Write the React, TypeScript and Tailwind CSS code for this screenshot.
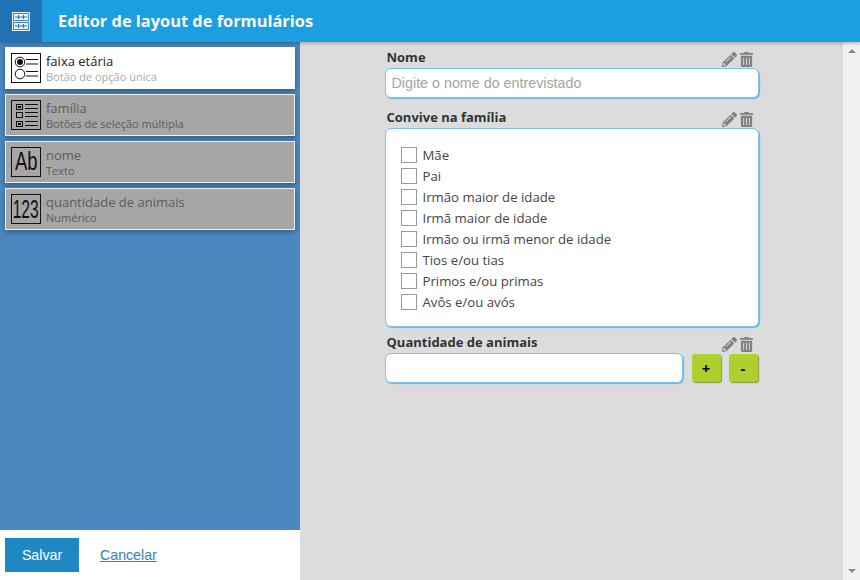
import { FaPencilAlt, FaTrashAlt } from "react-icons/fa";

const fields = [
  "Mãe",
  "Pai",
  "Irmão maior de idade",
  "Irmã maior de idade",
  "Irmão ou irmã menor de idade",
  "Tios e/ou tias",
  "Primos e/ou primas",
  "Avôs e/ou avós",
];

function RadioIcon() {
  return (
    <svg viewBox="0 0 30 30" className="w-[30px] h-[30px]">
      <rect x="0.5" y="0.5" width="29" height="29" fill="none" stroke="#111" />
      <circle cx="9" cy="9" r="4.8" fill="none" stroke="#111" />
      <circle cx="9" cy="9" r="3" fill="#111" />
      <circle cx="9" cy="21" r="4.8" fill="none" stroke="#111" />
      <path d="M15 6.5h12M15 11h12M15 18.5h12M15 23h12" stroke="#111" strokeWidth="1" />
    </svg>
  );
}

function CheckIcon() {
  return (
    <svg viewBox="0 0 30 30" className="w-[30px] h-[30px]">
      <rect x="0.5" y="0.5" width="29" height="29" fill="none" stroke="#111" />
      <rect x="5.5" y="4.5" width="6" height="5" fill="none" stroke="#111" />
      <rect x="7" y="6" width="3" height="2" fill="#111" />
      <rect x="5.5" y="12.5" width="6" height="5" fill="none" stroke="#111" />
      <rect x="5.5" y="21.5" width="6" height="5" fill="none" stroke="#111" />
      <rect x="7" y="23" width="3" height="2" fill="#111" />
      <path d="M14 4.5h13M14 8.5h13M14 12.5h13M14 16.5h13M14 21.5h13M14 25.5h13" stroke="#111" strokeWidth="1" />
    </svg>
  );
}

function TextBoxIcon({ label, small }: { label: string; small?: boolean }) {
  return (
    <div className="w-[30px] h-[30px] border border-[#111] flex items-center justify-center text-[#111] overflow-hidden font-['Liberation_Sans',sans-serif]">
      <span className={`shrink-0 inline-block ${small ? "text-[26px] scale-x-[0.6]" : "text-[25px] scale-x-[0.74]"}`}>{label}</span>
    </div>
  );
}

function SideItem({
  icon,
  title,
  sub,
  active,
}: {
  icon: React.ReactNode;
  title: string;
  sub: string;
  active?: boolean;
}) {
  return (
    <div
      className={`h-[42px] flex items-center gap-[5px] shadow-[0_2px_5px_rgba(0,0,0,0.35)] ${
        active ? "bg-white pl-[6px]" : "bg-[#a6a6a6] border border-[#f0f0f0] pl-[5px]"
      }`}
    >
      {icon}
      <div className="flex flex-col">
        <span className={`text-[13px] leading-[16px] ${active ? "text-[#222]" : "text-[#5c5c5c]"}`}>{title}</span>
        <span className={`text-[11px] leading-[15px] ${active ? "text-[#aaa]" : "text-[#5c5c5c]"}`}>{sub}</span>
      </div>
    </div>
  );
}

function FieldHeader({ label }: { label: string }) {
  return (
    <div className="flex items-end justify-between h-[17px] pl-[2px] pr-[5px]">
      <span className="text-[13px] leading-[17px] font-bold text-[#333]">{label}</span>
      <span className="flex items-center gap-[2px] text-[#808080] translate-y-[1px]">
        <FaPencilAlt size={15} />
        <FaTrashAlt size={15} />
      </span>
    </div>
  );
}

const inputBox =
  "relative bg-white rounded-[6px] border border-[#7cc4ee] shadow-[1px_1px_1px_#5fb6ec]";

export default function App() {
  return (
    <div className="w-[860px] h-[580px] flex flex-col overflow-hidden font-['Open_Sans',sans-serif]">
      <header className="h-[42px] flex items-center bg-[#1b9ee2] relative z-10 shadow-[0_1px_4px_rgba(0,0,0,0.3)]">
        <div className="w-[42px] h-[42px] bg-[#1f73b4] flex items-center justify-center">
          <svg viewBox="0 0 18 19" className="w-[18px] h-[19px]">
            <rect width="18" height="19" fill="#e8f2fa" />
            <rect x="1.5" y="1.5" width="15" height="7" fill="none" stroke="#3f86c4" />
            <rect x="1.5" y="10.5" width="15" height="7" fill="none" stroke="#3f86c4" />
            <path d="M3 5h12M3 14h12M6.5 3v4M11.5 3v4M6.5 12v4M11.5 12v4" stroke="#2f6fc0" />
          </svg>
        </div>
        <h1 className="ml-4 text-[16.4px] font-bold text-white">Editor de layout de formulários</h1>
      </header>

      <div className="flex-1 flex min-h-0">
        <aside className="w-[300px] flex flex-col bg-[#4a88bf]">
          <div className="flex-1 flex flex-col gap-[5px] pt-[5px] px-[5px]">
            <SideItem icon={<RadioIcon />} title="faixa etária" sub="Botão de opção única" active />
            <SideItem icon={<CheckIcon />} title="família" sub="Botões de seleção múltipla" />
            <SideItem icon={<TextBoxIcon label="Ab" />} title="nome" sub="Texto" />
            <SideItem icon={<TextBoxIcon label="123" small />} title="quantidade de animais" sub="Numérico" />
          </div>
          <div className="h-[50px] bg-white flex items-center pl-[5px] font-['Liberation_Sans',sans-serif]">
            <button className="w-[74px] h-[34px] pt-[1px] bg-[#1f88c4] text-white text-[14.2px] font-normal">Salvar</button>
            <a href="#" className="ml-[21px] translate-y-[1px] text-[14.2px] text-[#2f7fc0] underline">
              Cancelar
            </a>
          </div>
        </aside>

        <main className="flex-1 bg-[#dcdcdc]">
          <div className="w-[374px] mx-auto pt-[7px] flex flex-col">
            <FieldHeader label="Nome" />
            <div className={`${inputBox} mt-[2px] h-[30px] flex items-center px-[6px]`}>
              <span className="text-[14.3px] text-[#a3a3a3] translate-y-[1px] font-['Liberation_Sans',sans-serif]">Digite o nome do entrevistado</span>
            </div>

            <div className="mt-[11px]">
              <FieldHeader label="Convive na família" />
            </div>
            <div className={`${inputBox} mt-[2px] h-[199px] pt-[18px] pl-[15px] flex flex-col gap-[5px]`}>
              {fields.map((f) => (
                <label key={f} className="flex items-center gap-[6px] h-[16px]">
                  <span className="w-[16px] h-[16px] border border-[#999] bg-white" />
                  <span className="text-[13.2px] text-[#444] translate-y-[1px]">{f}</span>
                </label>
              ))}
            </div>

            <div className="mt-[7px]">
              <FieldHeader label="Quantidade de animais" />
            </div>
            <div className="mt-[2px] flex items-center">
              <div className={`${inputBox} w-[298px] h-[30px]`} />
              <button className="relative ml-[9px] w-[29px] h-[28px] rounded-[3px] bg-[#aed02f] shadow-[1px_1px_1px_#8a9a40] text-[15px] font-bold text-black">
                +
              </button>
              <button className="relative ml-[8px] w-[29px] h-[28px] rounded-[3px] bg-[#aed02f] shadow-[1px_1px_1px_#8a9a40] text-[15px] font-bold text-black">
                -
              </button>
            </div>
          </div>
        </main>

        <div className="w-[17px] bg-[#f1f1f1] flex flex-col items-center justify-between py-[6px]">
          <svg viewBox="0 0 8 4" className="w-[8px] h-[4px] mt-[1px]">
            <path d="M4 0L8 4H0z" fill="#8a8a8a" />
          </svg>
          <svg viewBox="0 0 8 4" className="w-[8px] h-[4px] mb-[1px]">
            <path d="M0 0H8L4 4z" fill="#8a8a8a" />
          </svg>
        </div>
      </div>
    </div>
  );
}
